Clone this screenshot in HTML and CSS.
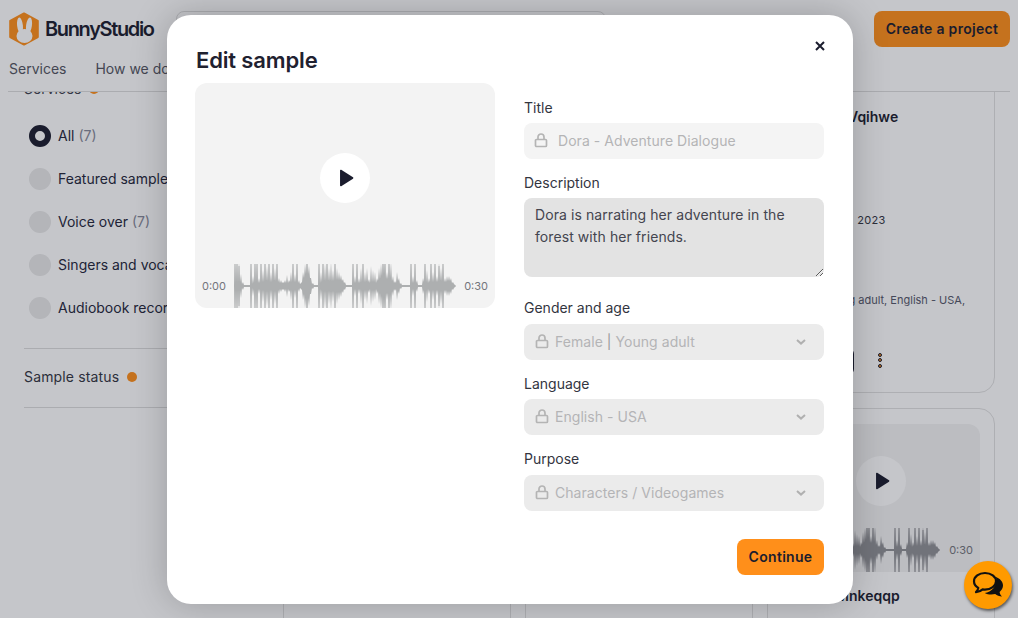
FILE: index.html
```html
<!DOCTYPE html>
<html lang="en">
<head>
<meta charset="utf-8">
<title>Edit sample - BunnyStudio</title>
<link rel="stylesheet" href="styles.css">
</head>
<body>
<svg class="defs" aria-hidden="true" width="0" height="0">
  <symbol id="wave" viewBox="0 0 222 44">
    <path class="wave-line" d="M0 22H222"/>
    <path class="wave-peaks" d="M1 0V44M3 0V44M5 2V42M17 0V44M21 0V44M23 0V44M27 0V44M31 0V44M35 0V44M39 0V44M43 0V44M59 0V44M63 0V44M73 0V44M85 0V44M89 0V44M93 0V44M101 0V44M119 0V44M123 0V44M129 0V44M149 0V44M151 0V44M155 0V44M177 0V44M181 0V44M191 0V44M197 0V44M201 0V44M205 2V42M209 0V44"/>
    <g class="wave-bars">
      <path id="wave-top" d="M0 22L1 -4 2 18 3 -4 4 18 5 -2 6 18 7 10 8 20 9 18 10 21 16 21 17 -4 18 20 19 12 20 19 21 -4 22 18 23 -4 24 19 25 14 26 19 27 -4 28 18 29 6 30 18 31 -4 32 17 33 2 34 17 35 -4 36 18 37 8 38 18 39 -4 40 17 41 4 42 17 43 -4 44 18 45 14 46 19 47 16 48 19 49 18 50 19 51 16 52 19 53 11 54 19 55 16 56 18 57 8 58 18 59 -4 60 18 61 10 62 18 63 -4 64 19 65 16 66 20 67 19 68 18 69 8 70 14 71 0 72 10 73 -4 74 10 75 2 76 14 77 14 78 20 79 19 80 21 84 21 85 -4 86 19 87 8 88 18 89 -4 90 17 91 0 92 17 93 -4 94 17 95 4 96 17 97 -2 98 17 99 6 100 17 101 -4 102 16 103 4 104 16 105 8 106 16 107 11 108 17 109 15 110 19 111 18 112 21 118 21 119 -4 120 19 121 12 122 19 123 -4 124 19 125 14 126 19 127 4 128 18 129 -4 130 18 131 8 132 18 133 4 134 18 135 15 136 19 137 2 138 18 139 6 140 18 141 8 142 19 143 14 144 17 145 4 146 15 147 0 148 12 149 -4 150 10 151 -4 152 15 153 8 154 15 155 -4 156 14 157 -2 158 17 159 12 160 19 161 17 162 19 163 8 164 17 165 14 166 20 167 19 168 21 176 21 177 -4 178 19 179 12 180 19 181 -4 182 19 183 16 184 21 188 21 189 14 190 18 191 -4 192 18 193 6 194 19 195 14 196 18 197 -4 198 18 199 8 200 18 201 -4 202 18 203 12 204 18 205 -2 206 17 207 4 208 17 209 -4 210 18 211 14 212 18 213 12 214 17 215 12 216 17 217 14 218 19 219 18 220 20 221 21 222 22Z"/>
      <use href="#wave-top" transform="matrix(1 0 0 -1 0 44)"/>
    </g>
  </symbol>
  <symbol id="lock" viewBox="0 0 14 15">
    <path class="lock-path" d="M1.5 7.5a1 1 0 0 1 1-1h9a1 1 0 0 1 1 1v5a1 1 0 0 1-1 1h-9a1 1 0 0 1-1-1zM4 6.5V4a3 3 0 0 1 6 0v2.5"/>
  </symbol>
  <symbol id="chev" viewBox="0 0 10 6">
    <path class="chev-path" d="M1 1l4 3.6L9 1"/>
  </symbol>
  <symbol id="play" viewBox="0 0 15 18">
    <path class="play-path" d="M1.8 1.5v15L13.6 9z"/>
  </symbol>
</svg>

<div class="page">
  <header class="topbar">
    <div class="topbar-row">
      <div class="brand">
        <svg class="brand-mark" viewBox="0 0 30 34" aria-hidden="true">
          <path class="hex" d="M15 1.500 28.800 9v16L15 32.500 1.200 25V9z"/>
          <g class="bunny">
            <ellipse cx="11" cy="13.500" rx="2.900" ry="8" transform="rotate(-6 11 13.500)"/>
            <ellipse cx="20" cy="13.500" rx="2.900" ry="8" transform="rotate(8 20 13.500)"/>
            <ellipse cx="15.500" cy="24" rx="8" ry="7"/>
          </g>
        </svg>
        <span class="brand-name">BunnyStudio</span>
      </div>
      <div class="search"></div>
      <button class="create" type="button">Create a project</button>
    </div>
    <nav class="nav">
      <a class="nav-link">Services</a>
      <a class="nav-link">How we do it</a>
    </nav>
  </header>

  <main class="content">
    <aside class="filters">
      <div class="filter-head"><span>Services</span><i class="dot"></i></div>
      <ul class="radio-list">
        <li class="radio-item"><i class="radio on"></i><span>All <em>(7)</em></span></li>
        <li class="radio-item"><i class="radio"></i><span>Featured samples</span></li>
        <li class="radio-item"><i class="radio"></i><span>Voice over <em>(7)</em></span></li>
        <li class="radio-item"><i class="radio"></i><span>Singers and vocalists</span></li>
        <li class="radio-item"><i class="radio"></i><span>Audiobook recording</span></li>
      </ul>
      <div class="status-row"><span>Sample status</span><i class="dot"></i></div>
    </aside>
    <section class="cards">
      <article class="card first">
        <div class="thumb"></div>
        <h3 class="card-title">Vqihwe</h3>
        <p class="card-date">May 17, 2023</p>
        <p class="card-meta">Female | Young adult, English - USA,</p>
        <div class="card-actions"><span class="outline-btn"></span><span class="kebab"><i></i><i></i><i></i></span></div>
      </article>
      <article class="card first"></article>
      <article class="card first">
        <div class="thumb"></div>
        <h3 class="card-title">Vqihwe</h3>
        <p class="card-date">May 17, 2023</p>
        <p class="card-meta">Female | Young adult, English - USA,</p>
        <div class="card-actions"><span class="outline-btn"></span><span class="kebab"><i></i><i></i><i></i></span></div>
      </article>
      <article class="card"></article>
      <article class="card"></article>
      <article class="card">
        <div class="thumb player">
          <span class="play-btn"><svg class="play-icon"><use href="#play"/></svg></span>
          <div class="player-bar">
            <svg class="wave-small"><use href="#wave"/></svg>
            <span class="time">0:30</span>
          </div>
        </div>
        <h3 class="card-title second">Mnkeqqp</h3>
      </article>
    </section>
  </main>

  <div class="overlay">
    <div class="modal" role="dialog" aria-label="Edit sample">
      <div class="modal-head">
        <h2 class="modal-title">Edit sample</h2>
        <svg class="close" viewBox="0 0 10 10" aria-label="Close"><path d="M1 1l8 8M9 1L1 9"/></svg>
      </div>
      <div class="modal-body">
        <div class="media">
          <span class="play-btn"><svg class="play-icon"><use href="#play"/></svg></span>
          <div class="media-bar">
            <span class="time">0:00</span>
            <svg class="wave-big"><use href="#wave"/></svg>
            <span class="time">0:30</span>
          </div>
        </div>
        <form class="form">
          <div class="field">
            <label class="label">Title</label>
            <div class="locked title-input"><svg class="lock"><use href="#lock"/></svg><span>Dora - Adventure Dialogue</span></div>
          </div>
          <div class="field area-field">
            <label class="label">Description</label>
            <textarea class="area">Dora is narrating her adventure in the forest with her friends.</textarea>
          </div>
          <div class="field select-field">
            <label class="label">Gender and age</label>
            <div class="locked select"><svg class="lock"><use href="#lock"/></svg><span>Female <i class="sep">|</i> Young adult</span><svg class="chev"><use href="#chev"/></svg></div>
          </div>
          <div class="field">
            <label class="label">Language</label>
            <div class="locked select"><svg class="lock"><use href="#lock"/></svg><span>English - USA</span><svg class="chev"><use href="#chev"/></svg></div>
          </div>
          <div class="field select-field">
            <label class="label">Purpose</label>
            <div class="locked select"><svg class="lock"><use href="#lock"/></svg><span>Characters / Videogames</span><svg class="chev"><use href="#chev"/></svg></div>
          </div>
          <div class="form-foot"><button class="continue" type="button">Continue</button></div>
        </form>
      </div>
    </div>
  </div>

  <button class="chat" type="button" aria-label="Chat">
    <svg viewBox="0 0 32 28" class="chat-icon" aria-hidden="true">
      <path class="bubble-back" d="M24 6c4 1.500 7 4.700 7 8.500 0 2.600-1.300 4.800-3.400 6.400.2 1.700 1.100 3.200 2.400 4.600-2.700-.1-5-1-6.800-2.500-1.300.3-2.600.5-4 .5-2.400 0-4.600-.6-6.400-1.600C19 21.500 26 15 24 6z"/>
      <path class="bubble-front" d="M13 2C6.900 2 2 5.700 2 10.300c0 2.700 1.700 5.100 4.300 6.600-.3 1.600-1.100 3-2.300 4.200 2.700-.1 5-1.200 6.700-2.700.7.100 1.500.2 2.300.2 6.100 0 11-3.700 11-8.300S19.100 2 13 2z"/>
    </svg>
  </button>
</div>
</body>
</html>
```

FILE: styles.css
```css
* { box-sizing: border-box; }
html, body { margin: 0; padding: 0; }
body {
  font-family: "Inter", "Noto Sans", "Liberation Sans", sans-serif;
  color: #1b1d2e;
  background: #fff;
}
.defs { position: absolute; }
.page { position: relative; width: 1018px; height: 618px; overflow: hidden; background: #fff; }

/* Page behind the dialog */
.topbar { position: relative; z-index: 1; height: 92px; margin: 0 8px; padding-top: 11px; background: #fff; border-bottom: 1px solid #dcdcdc; }
.topbar-row { display: flex; align-items: center; height: 36px; }
.brand { display: flex; align-items: center; width: 168px; padding-left: 1px; }
.brand-mark { width: 30px; height: 34px; flex: none; }
.hex { fill: #ff8f1a; stroke: #ff8f1a; stroke-width: 2; stroke-linejoin: round; }
.bunny { fill: #fff; }
.brand-name { margin-left: 6px; font-size: 20px; font-weight: 600; letter-spacing: -1.35px; }
.search { width: 430px; height: 36px; border: 1px solid #ddd; border-radius: 8px; }
.create { margin-left: auto; width: 136px; height: 36px; padding: 0 0 2px; border: 0; border-radius: 8px; background: #ff8f1a; color: #1b1d2e; font: 600 14px "Inter", sans-serif; letter-spacing: 0.3px; }
.nav { display: flex; gap: 29px; margin-top: 12px; padding-left: 1px; font-size: 14px; line-height: 20px; color: #53555f; }

.content { display: flex; height: 526px; overflow: hidden; }
.filters { flex: none; width: 283px; padding: 0 24px; font-size: 14px; line-height: 20px; }
.filter-head { display: flex; align-items: center; gap: 8px; height: 20px; margin-top: -13px; color: #3d3f4c; }
.dot { width: 10px; height: 10px; border-radius: 50%; background: #ff8f1a; }
.radio-list { margin: 26px 0 0; padding: 0 0 29px 5px; list-style: none; border-bottom: 1px solid #dcdcdc; }
.radio-item { display: flex; align-items: center; gap: 7px; height: 22px; margin-bottom: 21px; white-space: nowrap; color: #24263a; }
.radio-item:last-child { margin-bottom: 0; }
.radio-item em { font-style: normal; color: #858898; }
.radio { flex: none; width: 22px; height: 22px; border-radius: 50%; background: #e8e8e8; }
.radio.on { background: #fff; border: 6.500px solid #1b1d2e; }
.status-row { display: flex; align-items: center; gap: 8px; height: 59px; padding-bottom: 2px; border-bottom: 1px solid #dcdcdc; color: #33353f; letter-spacing: 0.15px; }

.cards { display: grid; grid-template-columns: repeat(3, 228px); column-gap: 14px; row-gap: 15px; grid-template-rows: 464px 300px; margin-top: -163px; align-content: start; }
.card { padding: 15px 14px; border: 1px solid #e0e0e0; border-radius: 16px; }
.thumb { height: 148px; border-radius: 12px; background: #f3f3f3; }
.first .thumb { height: 144px; }
.card-title { margin: 0; padding: 18px 0 0 66px; font-size: 14px; line-height: 20px; font-weight: 600; white-space: nowrap; }
.card-title.second { padding: 14px 0 0 54px; }
.card-date { margin: 0; padding: 85px 0 0 32px; font-size: 11px; line-height: 16px; letter-spacing: 0.3px; color: #33353f; white-space: nowrap; }
.card-meta { margin: 0 0 0 -7px; padding: 64px 0 0 0; font-size: 11px; line-height: 16px; color: #55576a; white-space: nowrap; }
.card-actions { display: flex; align-items: center; gap: 24px; margin-top: 40px; }
.outline-btn { width: 72px; height: 27px; border: 1px solid #1b1d2e; border-radius: 6px; }
.kebab { display: flex; flex-direction: column; gap: 1.500px; margin-top: -3px; }
.kebab i { width: 4px; height: 4px; border: 1px solid #1b1d2e; border-radius: 50%; background: #ff8f1a; }
.player { position: relative; }
.player .play-btn { position: absolute; left: 74px; top: 32px; }
.player-bar { position: absolute; right: 7px; bottom: 0; display: flex; align-items: center; gap: 9px; }
.wave-small { width: 222px; height: 44px; margin-left: -40px; color: #8f9094; }

/* Dialog layer */
.overlay { position: absolute; inset: 0; z-index: 2; display: flex; align-items: center; justify-content: center; padding-left: 2px; background: rgba(24, 28, 45, 0.25); }
.modal { width: 686px; height: 589px; padding: 0 29px 0 28px; background: #fff; border-radius: 24px; box-shadow: 0 0 36px rgba(0, 0, 0, 0.22); }
.modal-head { display: flex; justify-content: space-between; align-items: flex-start; height: 68px; padding-top: 29px; }
.modal-title { margin: 0 0 0 1px; font-size: 22px; line-height: 32px; font-weight: 600; letter-spacing: -0.15px; color: #1f2130; }
.close { width: 10px; height: 10px; margin-top: -3px; margin-right: -1px; fill: none; stroke: #1b1d2e; stroke-width: 2; }
.modal-body { display: grid; grid-template-columns: 300px 300px; column-gap: 29px; }

.media { position: relative; height: 225px; border-radius: 12px; background: #f3f3f3; }
.media > .play-btn { position: absolute; left: 125px; top: 70px; }
.play-btn { display: flex; align-items: center; justify-content: center; width: 50px; height: 50px; border-radius: 50%; background: #fff; }
.play-icon { width: 15px; height: 18px; margin-left: 3px; }
.play-path { fill: #1b1d2e; stroke: #1b1d2e; stroke-width: 1.500; stroke-linejoin: round; }
.media-bar { position: absolute; left: 7px; right: 7px; bottom: 0; display: flex; align-items: center; justify-content: space-between; height: 44px; }
.time { font-size: 11px; line-height: 16px; color: #73757c; }
.wave-big { width: 222px; height: 44px; color: #adafb0; }
.wave-line { fill: none; stroke: currentColor; stroke-width: 1; opacity: 0.45; }
.wave-peaks { fill: none; stroke: currentColor; stroke-width: 1.200; opacity: 0.8; filter: blur(0.3px); }
.wave-bars { fill: currentColor; filter: blur(0.3px); }

.form { margin-top: 15px; display: flex; flex-direction: column; }
.field { margin-bottom: 14px; }
.label { display: block; margin-bottom: 5px; font-size: 14px; line-height: 20px; color: #33353f; }
.select-field .label { margin-bottom: 6px; }
.locked { display: flex; align-items: center; height: 36px; border-radius: 8px; font-size: 14px; letter-spacing: 0.05px; color: #b4b4b6; }
.locked span { margin-top: -1px; }
.sep { font-style: normal; color: #98989b; }
.title-input { padding-left: 10px; gap: 10px; background: #f4f4f4; }
.select { padding: 0 18px 0 11px; gap: 6px; background: #ebebeb; }
.lock { width: 14px; height: 15px; flex: none; }
.lock-path { fill: none; stroke: #b4b4b4; stroke-width: 1.700; }
.chev { width: 10px; height: 6px; margin-left: auto; }
.chev-path { fill: none; stroke: #b0b0b0; stroke-width: 2; }
.area-field { margin-bottom: 21px; }
.area { display: block; width: 300px; height: 79px; padding: 6px 11px; border: 0; outline: 0; border-radius: 8px; background: #e3e3e3; color: #44454f; font: 14px/22px "Inter", sans-serif; letter-spacing: 0.08px; }
.form-foot { display: flex; justify-content: flex-end; margin-top: 14px; }
.continue { width: 87px; height: 36px; border: 0; border-radius: 8px; background: #ff8f1a; color: #1b1d2e; font: 600 14px "Inter", sans-serif; letter-spacing: 0.3px; }

.chat { position: absolute; z-index: 3; left: 964px; top: 561px; display: flex; align-items: center; justify-content: center; width: 48px; height: 48px; padding: 0; border: 0; border-radius: 50%; background: #ff9a00; box-shadow: 1px 2px 3px rgba(0, 0, 0, 0.55); }
.chat-icon { width: 32px; height: 28px; }
.bubble-back { fill: #111; }
.bubble-front { fill: #ff9a00; stroke: #111; stroke-width: 2.200; stroke-linejoin: round; }
```
